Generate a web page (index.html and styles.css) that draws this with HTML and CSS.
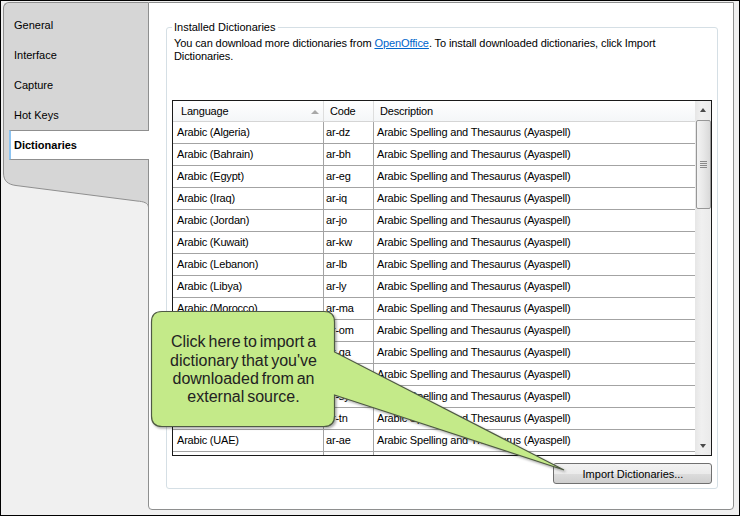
FILE: index.html
```html
<!DOCTYPE html>
<html>
<head>
<meta charset="utf-8">
<link rel="stylesheet" href="styles.css">
</head>
<body>
<div class="window">
  <aside class="sidebar">
    <div class="tabs">
      <div class="tab">General</div>
      <div class="tab">Interface</div>
      <div class="tab">Capture</div>
      <div class="tab">Hot Keys</div>
      <div class="tab selected">Dictionaries</div>
    </div>
    <svg class="tabs-bottom" width="146" height="34" viewBox="0 0 146 34">
      <path d="M0,0 H146 V34 C145,30 141,28.5 134,28 L13,12.5 C5,11.5 0.5,8 0.5,0 Z" fill="#d6d6d6"/>
      <path d="M0.5,0 C0.5,8 5,11.5 13,12.5 L134,28 C141,28.5 145,30 145.5,34" fill="none" stroke="#8f8f8f" stroke-width="1"/>
    </svg>
  </aside>
  <main class="panel">
    <fieldset class="group">
      <legend class="group-title">Installed Dictionaries</legend>
      <p class="intro">You can download more dictionaries from <a class="link" href="#">OpenOffice</a>. To install downloaded dictionaries, click Import<br>Dictionaries.</p>
      <div class="list">
        <div class="grid">
          <div class="row head">
            <div class="cell c1">Language<span class="sort"></span></div>
            <div class="cell c2">Code</div>
            <div class="cell c3">Description</div>
          </div>
          <div class="row"><div class="cell c1">Arabic (Algeria)</div><div class="cell c2">ar-dz</div><div class="cell c3">Arabic Spelling and Thesaurus (Ayaspell)</div></div>
          <div class="row"><div class="cell c1">Arabic (Bahrain)</div><div class="cell c2">ar-bh</div><div class="cell c3">Arabic Spelling and Thesaurus (Ayaspell)</div></div>
          <div class="row"><div class="cell c1">Arabic (Egypt)</div><div class="cell c2">ar-eg</div><div class="cell c3">Arabic Spelling and Thesaurus (Ayaspell)</div></div>
          <div class="row"><div class="cell c1">Arabic (Iraq)</div><div class="cell c2">ar-iq</div><div class="cell c3">Arabic Spelling and Thesaurus (Ayaspell)</div></div>
          <div class="row"><div class="cell c1">Arabic (Jordan)</div><div class="cell c2">ar-jo</div><div class="cell c3">Arabic Spelling and Thesaurus (Ayaspell)</div></div>
          <div class="row"><div class="cell c1">Arabic (Kuwait)</div><div class="cell c2">ar-kw</div><div class="cell c3">Arabic Spelling and Thesaurus (Ayaspell)</div></div>
          <div class="row"><div class="cell c1">Arabic (Lebanon)</div><div class="cell c2">ar-lb</div><div class="cell c3">Arabic Spelling and Thesaurus (Ayaspell)</div></div>
          <div class="row"><div class="cell c1">Arabic (Libya)</div><div class="cell c2">ar-ly</div><div class="cell c3">Arabic Spelling and Thesaurus (Ayaspell)</div></div>
          <div class="row"><div class="cell c1">Arabic (Morocco)</div><div class="cell c2">ar-ma</div><div class="cell c3">Arabic Spelling and Thesaurus (Ayaspell)</div></div>
          <div class="row"><div class="cell c1">Arabic (Oman)</div><div class="cell c2">ar-om</div><div class="cell c3">Arabic Spelling and Thesaurus (Ayaspell)</div></div>
          <div class="row"><div class="cell c1">Arabic (Qatar)</div><div class="cell c2">ar-qa</div><div class="cell c3">Arabic Spelling and Thesaurus (Ayaspell)</div></div>
          <div class="row"><div class="cell c1">Arabic (Saudi Arabia)</div><div class="cell c2">ar-sa</div><div class="cell c3">Arabic Spelling and Thesaurus (Ayaspell)</div></div>
          <div class="row"><div class="cell c1">Arabic (Syria)</div><div class="cell c2">ar-sy</div><div class="cell c3">Arabic Spelling and Thesaurus (Ayaspell)</div></div>
          <div class="row"><div class="cell c1">Arabic (Tunisia)</div><div class="cell c2">ar-tn</div><div class="cell c3">Arabic Spelling and Thesaurus (Ayaspell)</div></div>
          <div class="row"><div class="cell c1">Arabic (UAE)</div><div class="cell c2">ar-ae</div><div class="cell c3">Arabic Spelling and Thesaurus (Ayaspell)</div></div>
          <div class="row"><div class="cell c1"></div><div class="cell c2"></div><div class="cell c3"></div></div>
        </div>
        <div class="scrollbar">
          <div class="arrow up"></div>
          <div class="thumb"><span class="grip"></span></div>
          <div class="track"></div>
          <div class="arrow down"></div>
        </div>
      </div>
      <div class="actions">
        <button class="btn">Import Dictionaries...</button>
      </div>
    </fieldset>
  </main>

  <svg class="callout-shape" width="740" height="516" viewBox="0 0 740 516">
    <defs>
      <filter id="sh" x="-10%" y="-10%" width="130%" height="130%">
        <feDropShadow dx="1.5" dy="1.5" stdDeviation="1.2" flood-color="#000" flood-opacity="0.35"/>
      </filter>
    </defs>
    <path d="M162,311.5 H324 Q334.5,311.5 334.5,322 V352 L564,470 L334.5,395 V416 Q334.5,426.5 324,426.5 H162 Q151.5,426.5 151.5,416 V322 Q151.5,311.5 162,311.5 Z"
      fill="#c4ea89" stroke="#4f5a44" stroke-width="1.2" filter="url(#sh)"/>
  </svg>
  <div class="callout-text">Click here to import a<br>dictionary that you've<br>downloaded from an<br>external source.</div>
</div>
</body>
</html>
```

FILE: styles.css
```css
* { box-sizing: border-box; }
html, body { margin: 0; padding: 0; }
body {
  width: 740px;
  height: 516px;
  font-family: "Liberation Sans", Arial, sans-serif;
  font-size: 11px;
  color: #000;
  overflow: hidden;
}
.window {
  position: relative;
  width: 740px;
  height: 516px;
  border: 1px solid #000;
  background: #f0f0f0;
  display: flex;
  align-items: flex-start;
}

/* Sidebar */
.sidebar {
  width: 147px;
  flex: none;
  padding-top: 1px;
}
.tabs {
  margin-left: 2px;
  width: 145px;
  height: 171px;
  background: #d6d6d6;
  border-left: 1px solid #8f8f8f;
  border-top: 1px solid #8f8f8f;
  border-top-left-radius: 6px;
  padding-top: 7px;
}
.tab {
  height: 30px;
  line-height: 30px;
  padding-left: 10px;
}
.tab.selected {
  position: relative;
  z-index: 1;
  margin-left: 5px;
  margin-right: -1px;
  height: 30px;
  line-height: 28px;
  padding-left: 3px;
  background: #fff;
  border-top: 1px solid #8f8f8f;
  border-bottom: 1px solid #8f8f8f;
  border-left: 2px solid #8cc4f2;
  font-weight: bold;
}
.tabs-bottom {
  display: block;
  margin-left: 2px;
}

/* Panel */
.panel {
  width: 586px;
  height: 508px;
  margin-top: 1px;
  flex: none;
  background: #fff;
  border: 1px solid #8e8f8f;
  border-radius: 0 0 4px 4px;
  padding: 18px 15px 0 17px;
}
.group {
  margin: 0;
  border: 1px solid #d5dfe5;
  border-radius: 3px;
  padding: 0 5px 4px 5px;
}
.group-title {
  padding: 0 2px;
  margin-left: 0;
  line-height: 13px;
}
.intro {
  margin: 3px 0 0 2px;
  line-height: 13px;
  letter-spacing: -0.1px;
}
.link { color: #0066cc; text-decoration: underline; }

/* List */
.list {
  margin-top: 37px;
  border: 1px solid #1a1a1a;
  display: flex;
  height: 356px;
}
.grid {
  width: 522px;
  height: 354px;
  overflow: hidden;
}
.row {
  display: grid;
  grid-template-columns: 151px 50px 321px;
  height: 22px;
  border-bottom: 1px solid #a3a3a3;
}
.row .cell {
  line-height: 21px;
  white-space: nowrap;
  overflow: hidden;
  letter-spacing: -0.2px;
}
.c1 { padding-left: 4px; border-right: 1px solid #a3a3a3; }
.c2 { padding-left: 2px; border-right: 1px solid #a3a3a3; }
.c3 { padding-left: 3px; }
.row.head {
  height: 21px;
  background: linear-gradient(#ffffff, #f4f6f8);
  border-bottom: 1px solid #d5d5d5;
}
.row.head .cell { line-height: 21px; }
.row.head .c1 { padding-left: 8px; border-right-color: #dedede; position: relative; }
.row.head .c2 { padding-left: 6px; border-right-color: #dedede; }
.row.head .c3 { padding-left: 6px; }
.sort {
  position: absolute;
  right: 4px;
  top: 9px;
  width: 0;
  height: 0;
  border-left: 4.5px solid transparent;
  border-right: 4.5px solid transparent;
  border-bottom: 4px solid #a8a8a8;
}

.scrollbar {
  width: 16px;
  height: 354px;
  background: linear-gradient(to right, #e6e6e6, #f0f0f0 40%, #eaeaea);
  display: flex;
  flex-direction: column;
  align-items: center;
}
.arrow {
  height: 18px;
  width: 16px;
  display: flex;
  align-items: center;
  justify-content: center;
}
.arrow::before {
  content: "";
  width: 0;
  height: 0;
  border-left: 3.5px solid transparent;
  border-right: 3.5px solid transparent;
}
.arrow.up::before { border-bottom: 4px solid #4a4a4a; }
.arrow.down::before { border-top: 4px solid #4a4a4a; }
.thumb {
  width: 15px;
  height: 89px;
  margin-top: 1px;
  border: 1px solid #979797;
  border-radius: 2px;
  background: linear-gradient(to right, #f3f3f3, #e8e8e8 50%, #d9d9d9);
  display: flex;
  align-items: center;
  justify-content: center;
}
.grip {
  width: 7px;
  height: 7px;
  background: repeating-linear-gradient(#8a8a8a 0 1px, transparent 1px 2px);
}
.track { flex: 1; }

.actions {
  display: flex;
  justify-content: flex-end;
  margin-top: 7px;
}
.btn {
  width: 159px;
  height: 21px;
  font-family: "Liberation Sans", Arial, sans-serif;
  font-size: 11px;
  color: #000;
  border: 1px solid #707070;
  border-radius: 3px;
  background: linear-gradient(#f2f2f2 0%, #ebebeb 50%, #dddddd 51%, #cfcfcf 100%);
  padding: 0 0 0 1px;
}

/* Callout overlay */
.callout-shape {
  position: absolute;
  left: -1px;
  top: -1px;
  pointer-events: none;
}
.callout-text {
  position: absolute;
  left: 150px;
  top: 311px;
  width: 185px;
  height: 116px;
  display: flex;
  align-items: center;
  justify-content: center;
  text-align: center;
  font-family: "Liberation Sans", Arial, sans-serif;
  font-size: 16px;
  line-height: 18.3px;
  word-spacing: -1.5px;
  color: #222;
}
```
